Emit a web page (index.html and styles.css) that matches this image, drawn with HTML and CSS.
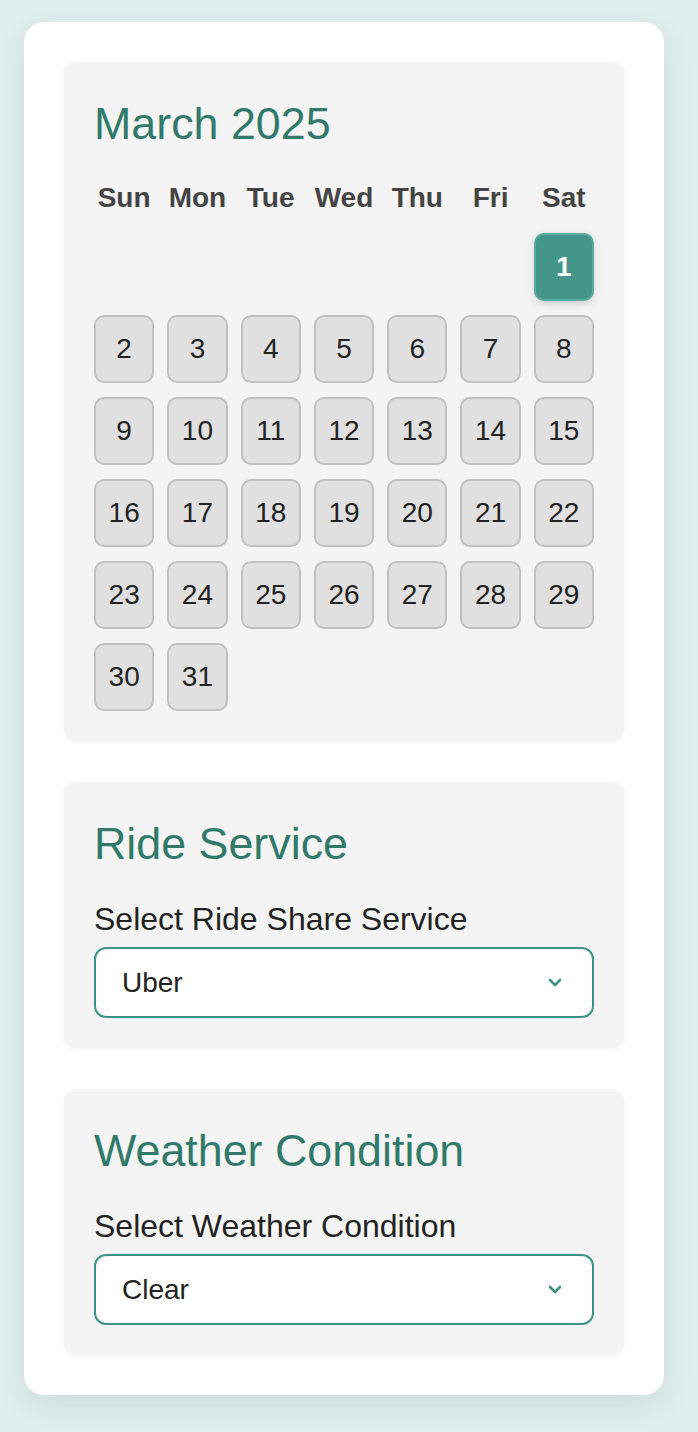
FILE: index.html
```html
<!DOCTYPE html>
<html lang="en">
<head>
<meta charset="utf-8">
<title>Ride Planner</title>
<link rel="stylesheet" href="styles.css">
</head>
<body>
<main class="container">
  <section class="card">
    <h2 class="card-title">March 2025</h2>
    <div class="calendar">
      <div class="dow">Sun</div><div class="dow">Mon</div><div class="dow">Tue</div><div class="dow">Wed</div><div class="dow">Thu</div><div class="dow">Fri</div><div class="dow">Sat</div>
      <div class="blank"></div><div class="blank"></div><div class="blank"></div><div class="blank"></div><div class="blank"></div><div class="blank"></div>
      <div class="day selected">1</div>
      <div class="day">2</div><div class="day">3</div><div class="day">4</div><div class="day">5</div><div class="day">6</div><div class="day">7</div><div class="day">8</div>
      <div class="day">9</div><div class="day">10</div><div class="day">11</div><div class="day">12</div><div class="day">13</div><div class="day">14</div><div class="day">15</div>
      <div class="day">16</div><div class="day">17</div><div class="day">18</div><div class="day">19</div><div class="day">20</div><div class="day">21</div><div class="day">22</div>
      <div class="day">23</div><div class="day">24</div><div class="day">25</div><div class="day">26</div><div class="day">27</div><div class="day">28</div><div class="day">29</div>
      <div class="day">30</div><div class="day">31</div>
    </div>
  </section>

  <section class="card">
    <h2 class="card-title">Ride Service</h2>
    <label class="field-label" for="ride">Select Ride Share Service</label>
    <div class="select-wrap">
      <select id="ride" class="select">
        <option>Uber</option>
        <option>Lyft</option>
      </select>
      <svg class="chevron" width="14" height="9" viewBox="0 0 14 9" aria-hidden="true"><polyline points="2,2 7,7 12,2" fill="none" stroke="#3f9183" stroke-width="2.6" stroke-linecap="round" stroke-linejoin="round"/></svg>
    </div>
  </section>

  <section class="card">
    <h2 class="card-title">Weather Condition</h2>
    <label class="field-label" for="weather">Select Weather Condition</label>
    <div class="select-wrap">
      <select id="weather" class="select">
        <option>Clear</option>
        <option>Rain</option>
        <option>Snow</option>
      </select>
      <svg class="chevron" width="14" height="9" viewBox="0 0 14 9" aria-hidden="true"><polyline points="2,2 7,7 12,2" fill="none" stroke="#3f9183" stroke-width="2.6" stroke-linecap="round" stroke-linejoin="round"/></svg>
    </div>
  </section>
</main>
</body>
</html>
```

FILE: styles.css
```css
* { box-sizing: border-box; }

html, body {
  margin: 0;
  padding: 0;
}

body {
  background: #e0eeed;
  font-family: "Liberation Sans", Arial, Helvetica, sans-serif;
  color: #222;
  padding: 22px 34px 38px 24px;
}

.container {
  width: 640px;
  background: #ffffff;
  border-radius: 20px;
  padding: 40px;
  box-shadow: 0 10px 30px rgba(40, 80, 75, 0.10);
  display: flex;
  flex-direction: column;
  gap: 41px;
}

.card {
  background: #f4f4f4;
  border-radius: 12px;
  padding: 30px;
  box-shadow: 0 1px 4px rgba(0, 0, 0, 0.05);
}

.card-title {
  margin: 0 0 22px;
  font-size: 44.8px;
  line-height: 63px;
  font-weight: 400;
  color: #317a6a;
}

.calendar {
  display: grid;
  grid-template-columns: repeat(7, 1fr);
  column-gap: 13px;
  row-gap: 14px;
}

.dow {
  font-size: 28px;
  line-height: 42px;
  font-weight: 700;
  color: #444;
  text-align: center;
}

.day {
  height: 68px;
  display: flex;
  align-items: center;
  justify-content: center;
  background: #e0e0e0;
  border: 2px solid #c0c0c0;
  border-radius: 10px;
  font-size: 28px;
  color: #222;
}

.day.selected {
  background: #44958a;
  border-color: #5aaa9d;
  color: #ffffff;
  font-weight: 700;
  box-shadow: 0 3px 8px rgba(0, 0, 0, 0.14);
}

.field-label {
  display: block;
  font-size: 32px;
  line-height: 45px;
  margin-bottom: 5px;
  color: #222;
}

.select-wrap {
  position: relative;
}

.select {
  display: block;
  width: 100%;
  height: 71px;
  -webkit-appearance: none;
  appearance: none;
  background: #ffffff;
  border: 2px solid #3f9183;
  border-radius: 12px;
  padding: 0 60px 0 26px;
  font-family: inherit;
  font-size: 28px;
  color: #222;
  outline: none;
}

.chevron {
  position: absolute;
  right: 32px;
  top: 31px;
  pointer-events: none;
}
```
